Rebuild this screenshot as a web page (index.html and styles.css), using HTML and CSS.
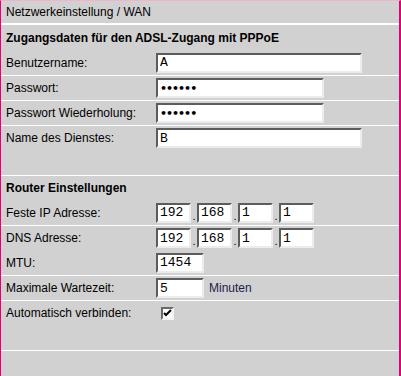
FILE: index.html
```html
<!DOCTYPE html>
<html lang="de">
<head>
    <meta charset="UTF-8">
    <title>Netzwerkeinstellung / WAN</title>
    <link rel="stylesheet" href="styles.css">
</head>
<body>
    <div class="frame">
        <div class="row header">Netzwerkeinstellung / WAN</div>

        <div class="row section">Zugangsdaten für den ADSL-Zugang mit PPPoE</div>
        <div class="row">
            <label class="label">Benutzername:</label>
            <input class="field wide" type="text" value="A">
        </div>
        <div class="row sep">
            <label class="label">Passwort:</label>
            <input class="field mid secret" type="password" value="xxxxxx">
        </div>
        <div class="row sep">
            <label class="label">Passwort Wiederholung:</label>
            <input class="field mid secret" type="password" value="xxxxxx">
        </div>
        <div class="row sep">
            <label class="label">Name des Dienstes:</label>
            <input class="field wide" type="text" value="B">
        </div>
        <div class="row"></div>

        <div class="row section sep">Router Einstellungen</div>
        <div class="row">
            <label class="label">Feste IP Adresse:</label>
            <div class="ip">
                <input class="field octet" type="text" value="192"><span class="dot">.</span>
                <input class="field octet" type="text" value="168"><span class="dot">.</span>
                <input class="field octet" type="text" value="1"><span class="dot">.</span>
                <input class="field octet" type="text" value="1">
            </div>
        </div>
        <div class="row sep">
            <label class="label">DNS Adresse:</label>
            <div class="ip">
                <input class="field octet" type="text" value="192"><span class="dot">.</span>
                <input class="field octet" type="text" value="168"><span class="dot">.</span>
                <input class="field octet" type="text" value="1"><span class="dot">.</span>
                <input class="field octet" type="text" value="1">
            </div>
        </div>
        <div class="row">
            <label class="label">MTU:</label>
            <input class="field short" type="text" value="1454">
        </div>
        <div class="row sep">
            <label class="label">Maximale Wartezeit:</label>
            <input class="field short" type="text" value="5">
            <span class="unit">Minuten</span>
        </div>
        <div class="row sep">
            <label class="label">Automatisch verbinden:</label>
            <span class="check">
                <svg width="9" height="9" viewBox="0 0 9 9">
                    <path d="M1 4 L3 6 L8 1" fill="none" stroke="#000" stroke-width="2"/>
                </svg>
            </span>
        </div>
        <div class="row"></div>
        <div class="row sep"></div>
    </div>
</body>
</html>
```

FILE: styles.css
```css
html, body {
    margin: 0;
    padding: 0;
}

body {
    font-family: "Liberation Sans", Arial, sans-serif;
    font-size: 12px;
    color: #000;
    background-color: #d1d1d1;
}

.frame {
    height: 376px;
    box-sizing: border-box;
    border-top: 1px solid #efb5cd;
    border-left: 1px solid #e20074;
    border-right: 2px solid #e20074;
    background-color: #d1d1d1;
    overflow: hidden;
}

.row {
    height: 25px;
    box-sizing: border-box;
    display: flex;
    align-items: center;
    padding-left: 5px;
}

.sep {
    border-top: 1px solid #fff;
}

.header {
    height: 24px;
    border-bottom: 2px solid #fff;
}

.section {
    font-weight: bold;
}

.label {
    width: 150px;
    flex-shrink: 0;
}

.field {
    height: 20px;
    box-sizing: border-box;
    margin: 0;
    padding: 0 2px;
    border: 2px solid;
    border-color: #5c5c5c #ececec #ececec #5c5c5c;
    background: #fff;
    font-family: "Liberation Mono", "Courier New", monospace;
    font-size: 13px;
    color: #000;
    outline: none;
}

.secret {
    font-family: "DejaVu Sans", sans-serif;
    font-size: 11px;
    font-weight: bold;
    letter-spacing: -1px;
}

.wide {
    width: 206px;
}

.mid {
    width: 168px;
}

.short {
    width: 48px;
}

.ip {
    display: flex;
    align-items: flex-end;
}

.octet {
    width: 35px;
}

.dot {
    width: 6px;
    text-align: center;
    font-size: 11px;
    line-height: 14px;
}

.unit {
    margin-left: 5px;
    color: #1c1c4c;
}

.check {
    margin-left: 5px;
    margin-top: 1px;
    width: 13px;
    height: 13px;
    box-sizing: border-box;
    border: 2px solid;
    border-color: #6a6a6a #f4f4f4 #f4f4f4 #6a6a6a;
    background: #fff;
    display: flex;
    align-items: center;
    justify-content: center;
}
```
